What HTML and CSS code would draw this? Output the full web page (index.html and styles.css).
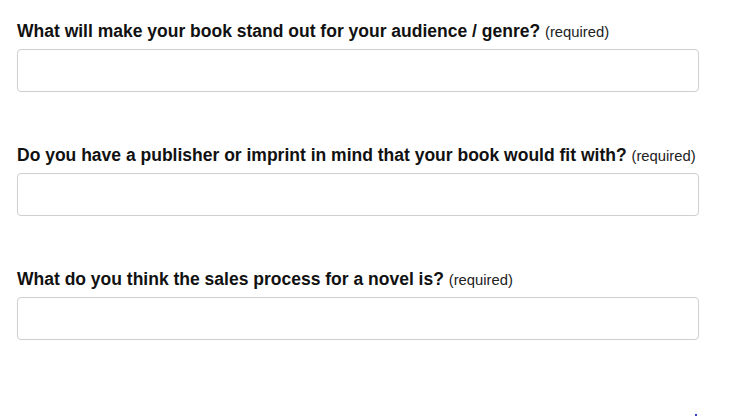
FILE: index.html
```html
<!DOCTYPE html>
<html>
<head>
<meta charset="utf-8">
<link rel="stylesheet" href="styles.css">
</head>
<body>
<form class="form">
  <div class="field">
    <label class="label">What will make your book stand out for your audience / genre? <span class="req">(required)</span></label>
    <input class="input" type="text">
  </div>
  <div class="field">
    <label class="label">Do you have a publisher or imprint in mind that your book would fit with? <span class="req">(required)</span></label>
    <input class="input" type="text">
  </div>
  <div class="field">
    <label class="label">What do you think the sales process for a novel is? <span class="req">(required)</span></label>
    <input class="input" type="text">
  </div>
</form>
<div class="dot"></div>
</body>
</html>
```
FILE: styles.css
```css
html, body {
  margin: 0;
  padding: 0;
  background: #fff;
}
body {
  font-family: "Liberation Sans", Arial, sans-serif;
  color: #000;
  position: relative;
  height: 417px;
  overflow: hidden;
}
.form {
  display: flex;
  flex-direction: column;
  gap: 53px;
  padding: 21px 0 0 17px;
  width: 682px;
}
.field {
  display: flex;
  flex-direction: column;
  gap: 8px;
}
.label {
  display: block;
  height: 20px;
  font-size: 17.5px;
  font-weight: bold;
  line-height: 20px;
  color: #111;
  white-space: nowrap;
}
.req {
  font-size: 14.8px;
  font-weight: normal;
  line-height: 1;
  color: #222;
}
.input {
  box-sizing: border-box;
  height: 43px;
  width: 682px;
  margin: 0;
  border: 1px solid #cfcfcf;
  border-radius: 4px;
  background: #fff;
  font-size: 16px;
  padding: 0 10px;
}
.dot {
  position: absolute;
  left: 695px;
  top: 414px;
  width: 2px;
  height: 2px;
  background: #3a3ad0;
}
```
